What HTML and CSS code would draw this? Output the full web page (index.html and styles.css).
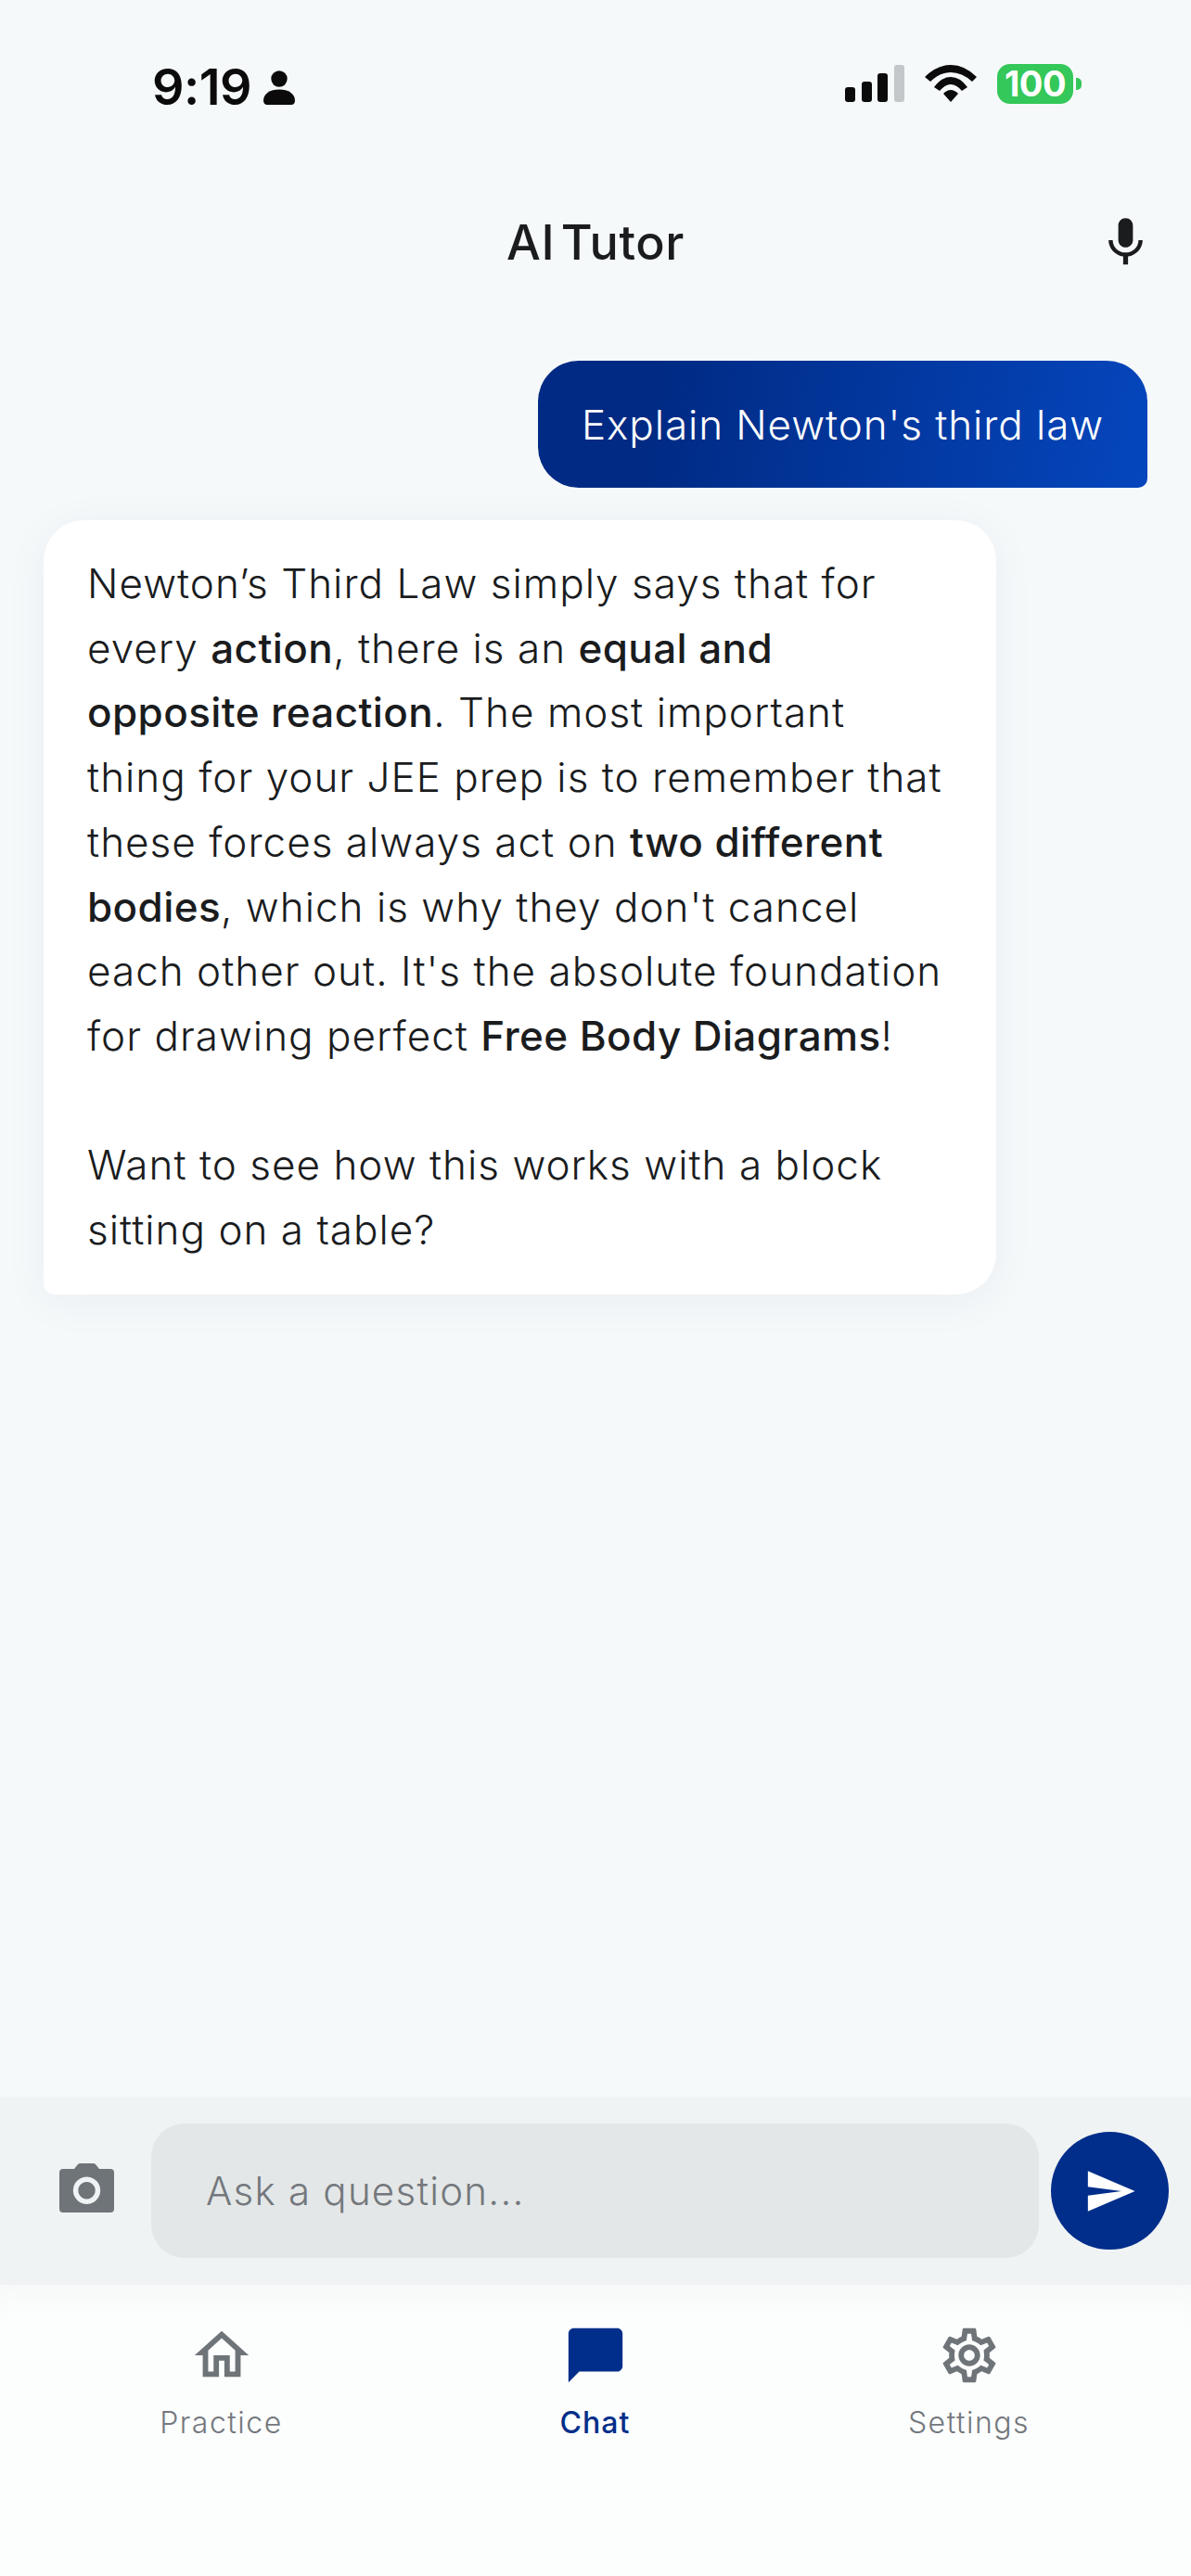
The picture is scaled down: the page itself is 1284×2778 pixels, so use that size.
FILE: index.html
```html
<!DOCTYPE html>
<html lang="en">
<head>
<meta charset="utf-8">
<title>AI Tutor</title>
<link rel="stylesheet" href="styles.css">
</head>
<body>
<div class="app">
  <div class="status">
    <div class="status-left"><span class="time">9:19</span>
      <svg class="person" viewBox="0 0 34 37"><circle cx="17" cy="9" r="8.700"/><path d="M0 32.500C0 25 7 20.500 17 20.500S34 25 34 32.500C34 35.500 32 37 30 37H4C2 37 0 35.500 0 32.500z"/></svg>
    </div>
    <div class="status-right">
      <svg class="signal" viewBox="0 0 64 40"><rect x="0" y="24" width="11" height="16" rx="3"/><rect x="18" y="18" width="11" height="22" rx="3"/><rect x="35" y="9" width="11" height="31" rx="3"/><rect x="53" y="0" width="11" height="40" rx="3" fill="#c4c7c9"/></svg>
      <svg class="wifi" viewBox="0 0 56 40"><path d="M0 13Q13 0 28 0T56 13L51 18Q40 8 28 8T6 18z"/><path d="M10 24Q18 13 28 13T46 24L40 28Q34 21 28 21T16 28z"/><path d="M20 31Q24 27 28 27T36 31L28 40z"/></svg>
      <div class="battery"><span class="batt-body">100</span><span class="batt-tip"></span></div>
    </div>
  </div>
  <header class="top">
    <h1>AI Tutor</h1>
    <svg class="mic" viewBox="0 0 24 24"><path d="M12 14c1.660 0 3-1.340 3-3V5c0-1.660-1.340-3-3-3S9 3.340 9 5v6c0 1.660 1.340 3 3 3zm5.300-3c0 3-2.540 5.100-5.300 5.100S6.700 14 6.700 11H5c0 3.410 2.720 6.230 6 6.720V21h2v-3.280c3.280-.48 6-3.300 6-6.720h-1.700z"/></svg>
  </header>
  <main class="chat">
    <div class="bubble-user">Explain Newton's third law</div>
    <div class="bubble-ai">
      <p>Newton’s Third Law simply says that for every <b>action</b>, there is an <b>equal and opposite reaction</b>. The most important thing for your JEE prep is to remember that these forces always act on <b>two different bodies</b>, which is why they don't cancel each other out. It's the absolute foundation for drawing perfect <b>Free Body Diagrams</b>!</p>
      <p class="gap">Want to see how this works with a block sitting on a table?</p>
    </div>
  </main>
  <div class="composer">
    <svg class="camera" viewBox="0 0 59 53"><path fill-rule="evenodd" d="M4 6H16L20 1Q21 0 23 0H36Q38 0 39 1L43 6H55Q59 6 59 10V49Q59 53 55 53H4Q0 53 0 49V10Q0 6 4 6zM29.500 14.500a14.700 14.700 0 1 0 .01 0zM29.500 20a9.200 9.200 0 1 1-.01 0z"/></svg>
    <div class="input">Ask a question...</div>
    <div class="send"><svg viewBox="0 0 24 24"><path d="M2.010 21 23 12 2.010 3 2 10l15 2-15 2z"/></svg></div>
  </div>
  <nav class="tabs">
    <div class="tab">
      <svg viewBox="0 0 24 24"><path d="M12 5.690l5 4.500V18h-2v-6H9v6H7v-7.810l5-4.500M12 3 2 12h3v8h6v-6h2v6h6v-8h3L12 3z"/></svg>
      <span>Practice</span>
    </div>
    <div class="tab active">
      <svg viewBox="0 0 24 24"><path d="M20 2H4c-1.100 0-2 .9-2 2v18l4-4h14c1.100 0 2-.9 2-2V4c0-1.100-.9-2-2-2z"/></svg>
      <span>Chat</span>
    </div>
    <div class="tab">
      <svg viewBox="0 0 24 24"><path d="M19.430 12.980c.04-.32.07-.64.07-.98s-.03-.66-.07-.98l2.110-1.650c.19-.15.24-.42.12-.64l-2-3.460c-.12-.22-.39-.3-.61-.22l-2.490 1c-.52-.4-1.080-.73-1.690-.98l-.38-2.650A.49.49 0 0 0 14 2h-4c-.25 0-.46.18-.49.42l-.38 2.650c-.61.25-1.170.59-1.690.98l-2.490-1c-.23-.09-.49 0-.61.22l-2 3.460c-.13.22-.07.49.12.64l2.110 1.650c-.04.32-.07.65-.07.98s.03.66.07.98l-2.110 1.650c-.19.15-.24.42-.12.64l2 3.460c.12.22.39.3.61.22l2.490-1c.52.4 1.080.73 1.690.98l.38 2.650c.03.24.24.42.49.42h4c.25 0 .46-.18.49-.42l.38-2.650c.61-.25 1.170-.59 1.690-.98l2.490 1c.23.09.49 0 .61-.22l2-3.460c.12-.22.07-.49-.12-.64l-2.110-1.650zM17.450 11.270c.04.31.05.52.05.73s-.02.43-.05.73l-.14 1.130.89.7 1.080.84-.7 1.210-1.270-.51-1.040-.42-.9.68c-.43.32-.84.56-1.250.73l-1.060.43-.16 1.130-.2 1.350h-1.400l-.19-1.350-.16-1.130-1.060-.43c-.43-.18-.83-.41-1.230-.71l-.91-.7-1.060.43-1.270.51-.7-1.210 1.080-.84.89-.7-.14-1.130c-.03-.31-.05-.54-.05-.74s.02-.43.05-.73l.14-1.130-.89-.7-1.080-.84.7-1.210 1.270.51 1.040.42.9-.68c.43-.32.84-.56 1.250-.73l1.060-.43.16-1.130.2-1.350h1.390l.19 1.350.16 1.130 1.060.43c.43.18.83.41 1.230.71l.91.7 1.060-.43 1.270-.51.7 1.210-1.070.85-.89.7.14 1.130zM12 8c-2.210 0-4 1.790-4 4s1.790 4 4 4 4-1.790 4-4-1.790-4-4-4zm0 6c-1.100 0-2-.9-2-2s.9-2 2-2 2 .9 2 2-.9 2-2 2z"/></svg>
      <span>Settings</span>
    </div>
  </nav>
</div>
</body>
</html>
```

FILE: styles.css
```css
* { box-sizing: border-box; margin: 0; padding: 0; }
html, body { width: 1284px; height: 2778px; overflow: hidden; }
body { background: #f6f9fa; font-family: Inter, "Liberation Sans", sans-serif; font-optical-sizing: none; color: #1a1c1e; }
.app { width: 1284px; height: 2778px; display: flex; flex-direction: column; }
.status { height: 190px; flex: none; display: flex; justify-content: space-between; align-items: flex-start; padding: 68px 118px 0 164px; }
.status-left { display: flex; align-items: center; gap: 13px; }
.time { font-size: 54px; line-height: 52px; font-weight: 600; color: #0b0b0b; letter-spacing: -0.5px; }
.person { width: 34px; height: 37px; fill: #0b0b0b; }
.status-right { display: flex; align-items: center; gap: 22px; height: 90px; margin-top: -23px; }
.signal { width: 64px; height: 40px; fill: #0b0b0b; }
.wifi { width: 56px; height: 40px; fill: #0b0b0b; }
.battery { display: flex; align-items: center; gap: 3px; }
.batt-body { width: 82px; height: 43px; border-radius: 14px; background: #34c759; color: #fff; font-size: 38px; font-weight: 700; line-height: 43px; letter-spacing: -0.5px; text-align: center; }
.batt-tip { width: 6px; height: 13px; border-radius: 0 5px 5px 0; background: #34c759; }
.top { height: 145px; flex: none; display: flex; align-items: center; justify-content: center; position: relative; }
.top h1 { font-size: 52px; font-weight: 500; font-optical-sizing: auto; letter-spacing: 0.6px; word-spacing: -8px; color: #1a1c1e; margin-top: -2px; }
.mic { position: absolute; right: 39px; top: 40px; width: 63px; height: 63px; fill: #1a1c1e; }
.chat { flex: 1; display: flex; flex-direction: column; align-items: flex-start; padding: 54px 47px 0; }
.bubble-user { align-self: flex-end; height: 137px; padding: 0 47px; display: flex; align-items: center; border-radius: 44px 44px 10px 44px; background: linear-gradient(100deg, #002a83 18%, #0546bd 100%); color: #fff; font-size: 44px; font-weight: 330; letter-spacing: 0.92px; }
.bubble-ai { margin-top: 35px; width: 1027px; padding: 34px 55px 34px 47px; background: #fff; border-radius: 44px 44px 44px 12px; box-shadow: 0 8px 48px rgba(0, 40, 100, 0.05); font-size: 44px; font-weight: 340; line-height: 69.7px; letter-spacing: 1.02px; color: #1a1c1e; }
.bubble-ai b { font-weight: 510; letter-spacing: 0.4px; }
.gap { margin-top: 69.7px; }
.composer { height: 203px; flex: none; background: #f0f3f4; display: flex; align-items: center; position: relative; padding: 0 164px 0 163px; }
.camera { position: absolute; left: 64px; top: 72px; width: 59px; height: 53px; fill: #6f7479; }
.input { width: 957px; height: 145px; border-radius: 36px; background: #e4e7e8; display: flex; align-items: center; padding: 0 59px; font-size: 42px; font-weight: 330; letter-spacing: 1.25px; color: #74787d; }
.send { position: absolute; left: 1133px; top: 38px; width: 127px; height: 127px; border-radius: 50%; background: #002e8a; display: flex; align-items: center; justify-content: center; }
.send svg { width: 58px; height: 58px; fill: #fff; }
.tabs { height: 314px; flex: none; background: #fcfdfd; display: flex; padding-top: 41px; box-shadow: inset 0 30px 40px -30px rgba(240, 243, 244, 0.8); }
.tab { width: 403px; display: flex; flex-direction: column; align-items: center; color: #74787d; font-size: 32px; font-weight: 330; letter-spacing: 1.5px; gap: 18px; }
.tab:first-child { margin-left: 37px; }
.tab svg { width: 70px; height: 70px; fill: #6f7479; }
.tab.active { color: #002e8a; font-weight: 500; letter-spacing: 1px; }
.tab.active svg { fill: #002e8a; }
```
